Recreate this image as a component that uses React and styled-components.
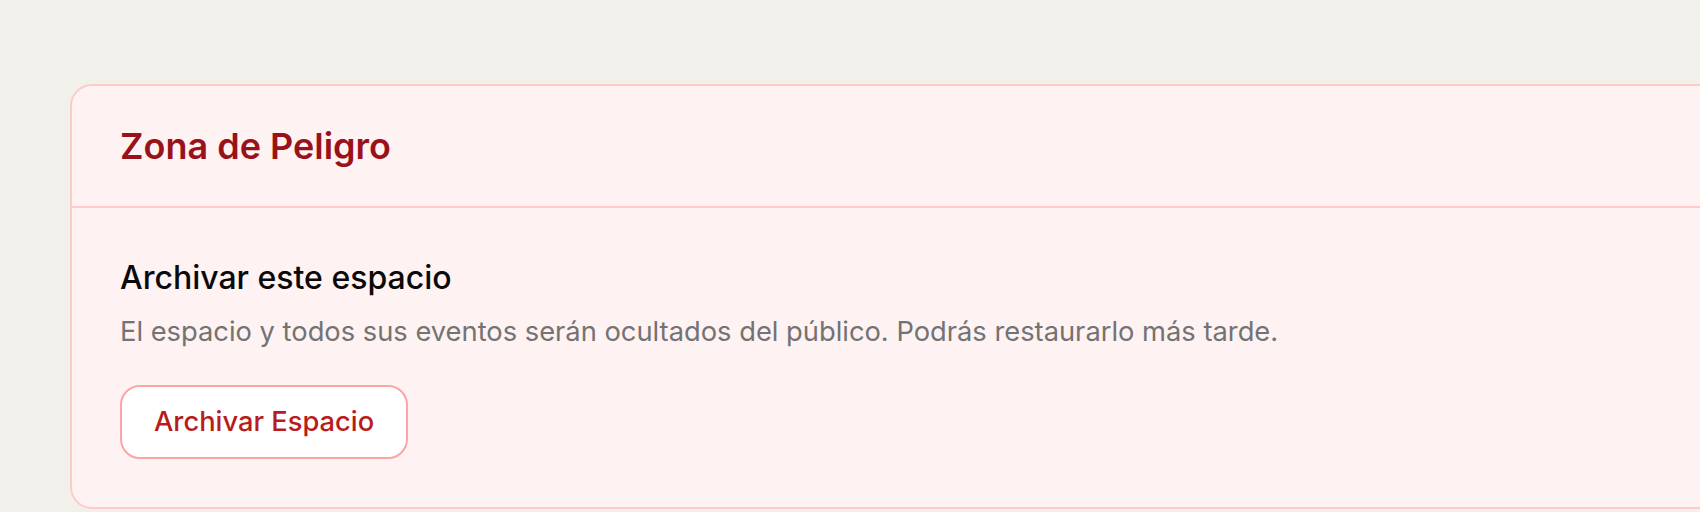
import React from 'react';
import styled, { createGlobalStyle } from 'styled-components';

const GlobalStyle = createGlobalStyle`
  html,
  body {
    margin: 0;
    padding: 0;
    overflow: hidden;
    background: #f2f0eb;
    font-family: Inter, 'Noto Sans', sans-serif;
    -webkit-font-smoothing: antialiased;
  }
`;

const Page = styled.main`
  padding: 84px 0 0 70px;
  min-height: 512px;
  box-sizing: border-box;
`;

const DangerCard = styled.section`
  width: 1700px;
  background: #fef2f2;
  border: 2px solid #fecaca;
  border-radius: 22px;
  box-sizing: border-box;
`;

const CardHeader = styled.header`
  padding: 36px 48px;
  border-bottom: 2px solid #fecaca;
`;

const CardTitle = styled.h2`
  margin: 0;
  font-size: 36px;
  line-height: 48px;
  font-weight: 600;
  color: #9a1219;
`;

const CardBody = styled.div`
  padding: 48px;
`;

const ActionTitle = styled.h3`
  margin: 0;
  font-size: 32px;
  line-height: 44px;
  font-weight: 500;
  color: #0a0a0a;
`;

const ActionText = styled.p`
  margin: 12px 0 0;
  font-size: 27.3px;
  line-height: 40px;
  font-weight: 400;
  color: #737373;
`;

const DangerButton = styled.button`
  margin-top: 33px;
  padding: 15px 32px;
  font-family: inherit;
  font-size: 27.3px;
  line-height: 40px;
  font-weight: 500;
  color: #b91c1c;
  background: #ffffff;
  border: 2px solid #fca5a5;
  border-radius: 20px;
  cursor: pointer;
`;

export default function App() {
  return (
    <>
      <GlobalStyle />
      <Page>
        <DangerCard>
          <CardHeader>
            <CardTitle>Zona de Peligro</CardTitle>
          </CardHeader>
          <CardBody>
            <ActionTitle>Archivar este espacio</ActionTitle>
            <ActionText>
              El espacio y todos sus eventos serán ocultados del público. Podrás restaurarlo más tarde.
            </ActionText>
            <DangerButton type="button">Archivar Espacio</DangerButton>
          </CardBody>
        </DangerCard>
      </Page>
    </>
  );
}
